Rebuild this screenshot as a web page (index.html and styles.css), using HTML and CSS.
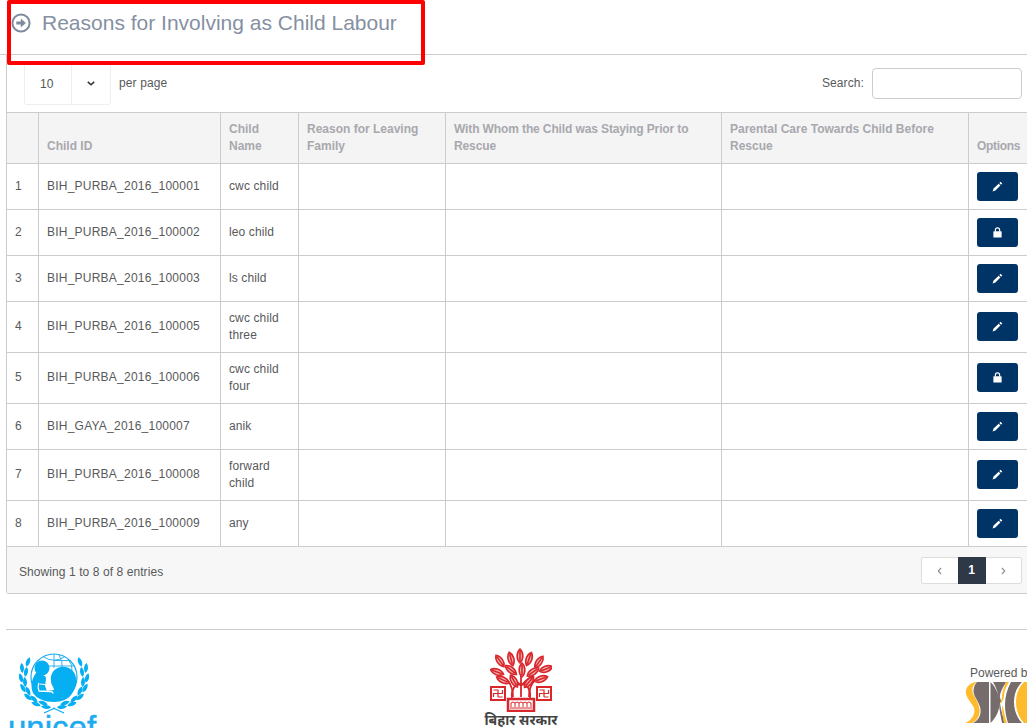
FILE: index.html
```html
<!DOCTYPE html>
<html lang="en">
<head>
<meta charset="utf-8">
<title>Reasons for Involving as Child Labour</title>
<link rel="stylesheet" href="styles.css">
</head>
<body>
<svg class="defs" width="0" height="0">
  <defs>
    <g id="pen"><path d="M9.3.9l1.9 1.900-1.300 1.300L8 2.200zM7.300 2.900l1.900 1.900-5.500 5.500-3.100 1.100 1.100-3.100z" fill="#fff"/></g>
    <g id="lock"><rect x="1.500" y="4.600" width="9" height="6.900" rx=".6" fill="#fff"/><path d="M3.700 5V3.200C3.700 1.900 4.700 1 6 1s2.300.9 2.300 2.200V5" fill="none" stroke="#fff" stroke-width="1.300"/></g>
    <path id="leaf" d="M0-7C3.800-3.500 3.800 3.500 0 7-3.800 3.500-3.800-3.500 0-7zM0-5V5" fill="#f4b4b4" stroke="#d8262c" stroke-width="1.600"/>
    <path id="wleaf" d="M0-5C2.600-2 2.600 2 0 5-2.600 2-2.600-2 0-5z" fill="#06aef2"/>
  </defs>
</svg>
<div class="highlight"></div>
<header class="page-head">
  <svg class="head-icon" viewBox="0 0 20 20"><circle cx="10" cy="10" r="8.600" fill="none" stroke="#7f8b9e" stroke-width="2"/><path d="M5.300 8.400h4.500V5.600L14.800 10l-5 4.400v-2.800H5.300z" fill="#7f8b9e"/></svg>
  <h1>Reasons for Involving as Child Labour</h1>
</header>
<main class="panel">
  <div class="toolbar">
    <div class="length">
      <div class="length-box"><span class="length-val">10</span><span class="length-arrow"><svg viewBox="0 0 10 6" class="chev"><path d="M1 1l4 3.600L9 1" fill="none" stroke="#333" stroke-width="2"/></svg></span></div>
      <span class="per">per page</span>
    </div>
    <label class="search">Search:<span class="search-input"></span></label>
  </div>
  <table>
    <colgroup><col class="c1"><col class="c2"><col class="c3"><col class="c4"><col class="c5"><col class="c6"><col class="c7"></colgroup>
    <thead><tr><th></th><th>Child ID</th><th>Child Name</th><th>Reason for Leaving Family</th><th class="th-tight">With Whom the Child was Staying Prior to Rescue</th><th>Parental Care Towards Child Before Rescue</th><th class="th-opt">Options</th></tr></thead>
    <tbody>
      <tr><td>1</td><td class="id">BIH_PURBA_2016_100001</td><td>cwc child</td><td></td><td></td><td></td><td class="opt"><a class="btn"><svg viewBox="0 0 12 12"><use href="#pen"/></svg></a></td></tr>
      <tr><td>2</td><td class="id">BIH_PURBA_2016_100002</td><td>leo child</td><td></td><td></td><td></td><td class="opt"><a class="btn"><svg viewBox="0 0 12 12"><use href="#lock"/></svg></a></td></tr>
      <tr><td>3</td><td class="id">BIH_PURBA_2016_100003</td><td>ls child</td><td></td><td></td><td></td><td class="opt"><a class="btn"><svg viewBox="0 0 12 12"><use href="#pen"/></svg></a></td></tr>
      <tr class="tall"><td>4</td><td class="id">BIH_PURBA_2016_100005</td><td class="two">cwc child three</td><td></td><td></td><td></td><td class="opt"><a class="btn"><svg viewBox="0 0 12 12"><use href="#pen"/></svg></a></td></tr>
      <tr class="tall"><td>5</td><td class="id">BIH_PURBA_2016_100006</td><td class="two">cwc child four</td><td></td><td></td><td></td><td class="opt"><a class="btn"><svg viewBox="0 0 12 12"><use href="#lock"/></svg></a></td></tr>
      <tr><td>6</td><td class="id">BIH_GAYA_2016_100007</td><td>anik</td><td></td><td></td><td></td><td class="opt"><a class="btn"><svg viewBox="0 0 12 12"><use href="#pen"/></svg></a></td></tr>
      <tr class="tall"><td>7</td><td class="id">BIH_PURBA_2016_100008</td><td class="two">forward child</td><td></td><td></td><td></td><td class="opt"><a class="btn"><svg viewBox="0 0 12 12"><use href="#pen"/></svg></a></td></tr>
      <tr><td>8</td><td class="id">BIH_PURBA_2016_100009</td><td>any</td><td></td><td></td><td></td><td class="opt"><a class="btn"><svg viewBox="0 0 12 12"><use href="#pen"/></svg></a></td></tr>
    </tbody>
  </table>
  <div class="panel-foot">
    <span>Showing 1 to 8 of 8 entries</span>
    <div class="pager">
      <span class="pg"><svg viewBox="0 0 6 10" class="pg-chev"><path d="M5 1L1.500 5 5 9" fill="none" stroke="#8a8f99" stroke-width="1.500"/></svg></span>
      <span class="pg cur">1</span>
      <span class="pg"><svg viewBox="0 0 6 10" class="pg-chev"><path d="M1 1l3.500 4L1 9" fill="none" stroke="#8a8f99" stroke-width="1.500"/></svg></span>
    </div>
  </div>
</main>
<footer class="site-foot">
  <div class="logo-unicef">
    <svg viewBox="0 0 70 62" class="unicef-mark">
      <g fill="none" stroke="#1cabf0">
        <circle cx="35" cy="24" r="23" stroke-width="1.200"/>
        <path d="M35 1v14M24 3.500Q35 11 46 3.500M28 13H56M40 2q4 6 3 13M49 6q5 6 4 12M36 7.500H51" stroke-width=".9"/>
      </g>
      <g fill="#06aef2">
        <circle cx="23" cy="15" r="7.500"/>
        <path d="M18 19c-5 5-7 14-4 21 4 6 12 9 21 9 8 0 14-3 17-7 4-5 6-11 5-17-1-8-8-12-15-11-7 1-11 7-10 14 0 4 3 6 3 9l-7 1-2-5 1-7c0-3-2-4-4-4z"/>
      </g>
      <path d="M20 30c-1 2-1 6 0 8l11 .500c2 0 3 1 3 2" fill="none" stroke="#fff" stroke-width="1.300"/>
      <path d="M21 31l9 1" fill="none" stroke="#fff" stroke-width="1"/>
      <g>
        <use href="#wleaf" transform="translate(9 9) rotate(20)"/><use href="#wleaf" transform="translate(3 15) rotate(-5)"/><use href="#wleaf" transform="translate(7 19) rotate(10)"/><use href="#wleaf" transform="translate(2 25) rotate(-15)"/><use href="#wleaf" transform="translate(6 29) rotate(-5)"/><use href="#wleaf" transform="translate(4 35) rotate(-30)"/><use href="#wleaf" transform="translate(9 38) rotate(-25)"/><use href="#wleaf" transform="translate(9 44) rotate(-50)"/><use href="#wleaf" transform="translate(15 46) rotate(-45)"/><use href="#wleaf" transform="translate(17 51) rotate(-70)"/><use href="#wleaf" transform="translate(24 50) rotate(-70)"/><use href="#wleaf" transform="translate(27 54) rotate(-85)"/>
        <use href="#wleaf" transform="translate(61 9) rotate(-20)"/><use href="#wleaf" transform="translate(67 15) rotate(5)"/><use href="#wleaf" transform="translate(63 19) rotate(-10)"/><use href="#wleaf" transform="translate(68 25) rotate(15)"/><use href="#wleaf" transform="translate(64 29) rotate(5)"/><use href="#wleaf" transform="translate(66 35) rotate(30)"/><use href="#wleaf" transform="translate(61 38) rotate(25)"/><use href="#wleaf" transform="translate(61 44) rotate(50)"/><use href="#wleaf" transform="translate(55 46) rotate(45)"/><use href="#wleaf" transform="translate(53 51) rotate(70)"/><use href="#wleaf" transform="translate(46 50) rotate(70)"/><use href="#wleaf" transform="translate(43 54) rotate(85)"/>
      </g>
      <path d="M25 60l11-5M45 60l-11-5" fill="none" stroke="#06aef2" stroke-width="1.300"/>
    </svg>
    <div class="unicef-word">unicef</div>
  </div>
  <div class="logo-bihar">
    <svg viewBox="0 0 62 64" class="bihar-mark">
      <g fill="none" stroke="#d8262c" stroke-width="1.800">
        <path d="M23 49c0-6-1-12-6-17M39 49c0-6 1-12 6-17M31 36V20M31 38c-3-4-6-7-11-9M31 38c3-4 6-7 11-9"/>
        <path d="M22 50c-1-7 2-14 9-14s10 7 9 14"/>
        <path d="M31 37v12"/>
      </g>
      <use href="#leaf" transform="translate(30 8)"/><use href="#leaf" transform="translate(39 11) rotate(20)"/><use href="#leaf" transform="translate(21 11) rotate(-15)"/><use href="#leaf" transform="translate(49 14) rotate(35)"/><use href="#leaf" transform="translate(10 13) rotate(-35)"/><use href="#leaf" transform="translate(56 21) rotate(70)"/><use href="#leaf" transform="translate(7 24) rotate(-70)"/><use href="#leaf" transform="translate(21 22) rotate(-50)"/><use href="#leaf" transform="translate(32 22)"/><use href="#leaf" transform="translate(43 24) rotate(55)"/><use href="#leaf" transform="translate(13 32) rotate(-65)"/><use href="#leaf" transform="translate(51 31) rotate(70)"/><use href="#leaf" transform="translate(24 33) rotate(-30)"/><use href="#leaf" transform="translate(39 34) rotate(40)"/>
      <g fill="#fff" stroke="#d8262c">
        <rect x="1" y="39" width="14" height="13" stroke-width="2"/><rect x="47" y="39" width="14" height="13" stroke-width="2"/>
        <rect x="18" y="51" width="26" height="12" stroke-width="2.500"/>
      </g>
      <path d="M3.500 42H8v7M12.500 49H8M8 45.500H3.500V49M8 45.500h4.500V42M49.500 42H54v7M58.500 49H54M54 45.500h-4.500V49M54 45.500h4.500V42" fill="none" stroke="#d8262c" stroke-width="1.200"/>
      <path d="M21 59v-4l2-1 2 1v4M25 55l2-1 2 1v4M29 55l2-1 2 1v4M33 55l2-1 2 1v4M37 55l2-1 2 1v4M20 60h22" fill="none" stroke="#d8262c" stroke-width="1"/>
    </svg>
    <div class="bihar-word">बिहार सरकार</div>
  </div>
  <div class="logo-sdrc">
    <div class="powered">Powered by</div>
    <svg viewBox="0 0 62 41" class="sdrc-mark">
      <path d="M11 0C4 1 0 6 1 12c1 5 6 9 8 14 2 6-3 13-9 15h7c6-3 9-9 7-16C13 18 8 14 7.500 9 7 5 9 2 12 0z" fill="#fdbb2d"/>
      <path d="M12 0H24V41H8C14 38 17 32 15 25 13 18 8.500 14 8.500 9 8.500 5 10 2 12 0z" fill="#766c6b"/>
      <path d="M25.500 0c6 6 9 14 9 21s-3 14-9 20z" fill="#766c6b"/>
      <path d="M28 0H41l-1 2c-3 5-5 9-5 12 0 3 1 5 2 6l-2 1c1 8 3 14 5 20h-3c-1-6-3-14-3-20 0-9-3-16-6-21z" fill="#766c6b"/>
      <path d="M41 0h3c-3 5-5 10-5 13 0 3-1 6-3 8l-1-1c2-2 2-4 2-6 0-4 2-9 4-14z" fill="#fdbb2d"/>
      <path d="M38 24c1 7 2 12 4 17h-3c-1-5-2-11-2-16z" fill="#fdbb2d"/>
      <path d="M46 0H57C52 5 49 12 49 20c0 8 3 16 8 21H43c-2-6-3-12-3-18 0-8 2-16 6-23z" fill="#766c6b"/>
      <path d="M62 0h-3c-5 5-8 12-8 20s3 16 8 21h3z" fill="#fdbb2d"/>
    </svg>
  </div>
</footer>
</body>
</html>
```
FILE: styles.css
```css
* { box-sizing: border-box; }
html, body { margin: 0; padding: 0; }
body {
  width: 1027px;
  height: 728px;
  overflow: hidden;
  position: relative;
  background: #fff;
  color: #58595b;
  font-family: "Liberation Sans", Arial, sans-serif;
  font-size: 12px;
  line-height: 17px;
}
.highlight {
  position: absolute;
  left: 7px;
  top: 0;
  width: 418px;
  height: 65px;
  border: 4px solid #f00;
  border-radius: 2px;
  z-index: 5;
}
.page-head {
  height: 55px;
  border-bottom: 1px solid #ccc;
  display: flex;
  align-items: flex-start;
  padding: 11px 0 0 11px;
  gap: 11px;
}
.head-icon { width: 20px; height: 20px; flex: none; margin-top: 2px; }
h1 {
  margin: 0;
  font-size: 21px;
  font-weight: 400;
  line-height: 23px;
  color: #8590a2;
}
.panel {
  margin-left: 6px;
  width: 1021px;
  border-left: 1px solid #ccc;
  border-bottom: 1px solid #ccc;
  border-radius: 0 0 0 3px;
}
.toolbar {
  height: 57px;
  display: flex;
  justify-content: space-between;
  padding: 7px 5px 0 17px;
  align-items: flex-start;
}
.length { display: flex; gap: 8px; align-items: flex-start; }
.length-box {
  width: 87px;
  height: 43px;
  border: 1px solid #eee;
  border-radius: 3px;
  display: flex;
}
.length-val { width: 46px; padding: 13px 0 0 15px; color: #555; }
.length-arrow { flex: 1; border-left: 1px solid #eee; display: flex; align-items: center; justify-content: center; padding-right: 1px; }
.chev { width: 8px; height: 5px; }
.per { padding-top: 13px; letter-spacing: 0.12px; }
.search { display: flex; align-items: center; gap: 8px; padding-top: 6px; letter-spacing: 0.1px; }
.search-input { width: 150px; height: 31px; border: 1px solid #ccc; border-radius: 4px; background: #fff; }
table {
  border-collapse: collapse;
  table-layout: fixed;
  width: 1021px;
  margin-left: -1px;
}
.c1 { width: 32px; }
.c2 { width: 182px; }
.c3 { width: 78px; }
.c4 { width: 147px; }
.c5 { width: 276px; }
.c6 { width: 247px; }
.c7 { width: 59px; }
th, td { border: 1px solid #ccc; padding: 8px; vertical-align: middle; text-align: left; font-weight: 400; }
td { letter-spacing: 0.12px; }
td.id { letter-spacing: 0.23px; }
th { background: #f4f4f4; color: #a8a8ae; font-weight: 700; vertical-align: bottom; }
.th-tight { letter-spacing: -0.12px; }
.th-opt { letter-spacing: -0.3px; }
tr > :last-child { border-right: none; }
.tall td { vertical-align: top; padding-top: 16px; }
.tall td.two { padding-top: 8px; }
.tall td.opt { padding-top: 10px; }
.btn {
  display: flex;
  width: 41px;
  height: 29px;
  background: #003366;
  border-radius: 3px;
  align-items: center;
  justify-content: center;
}
.btn svg { width: 11px; height: 11px; display: block; }
.panel-foot {
  height: 46px;
  background: #f7f7f7;
  display: flex;
  justify-content: space-between;
  align-items: flex-start;
  padding: 10px 5px 0 12px;
}
.panel-foot > span { padding-top: 7px; letter-spacing: 0.08px; }
.pager {
  display: flex;
  height: 27px;
  border: 1px solid #ddd;
  border-radius: 2px;
  background: #fff;
  width: 101px;
}
.pg { flex: 1; display: flex; align-items: center; justify-content: center; }
.pg-chev { width: 5px; height: 8px; }
.pg.cur { flex: none; width: 28px; margin: -1px 0; background: #2f3847; color: #fff; font-weight: 700; }
.site-foot {
  margin: 35px 0 0 6px;
  border-top: 1px solid #ccc;
  display: grid;
  grid-template-columns: 470px 90px 1fr;
  height: 99px;
  overflow: hidden;
}
.logo-unicef { padding: 23px 0 0 13px; }
.unicef-mark { display: block; width: 70px; height: 62px; }
.unicef-word {
  font-size: 33px;
  line-height: 30px;
  color: #1cabf0;
  -webkit-text-stroke: 0.5px #1cabf0;
  margin: -2px 0 0 -11px;
}
.logo-bihar { padding-top: 18px; text-align: center; }
.bihar-mark { display: block; width: 62px; height: 64px; margin: 0 auto; }
.bihar-word {
  font-family: "Noto Sans", "DejaVu Sans", sans-serif;
  font-size: 14px;
  line-height: 16px;
  color: #444;
  font-weight: 700;
  white-space: nowrap;
}
.logo-sdrc { width: 62px; justify-self: end; padding-top: 36px; }
.powered { padding-left: 5px; line-height: 15px; white-space: nowrap; }
.sdrc-mark { display: block; width: 62px; height: 41px; margin-top: 1px; }
.defs { position: absolute; }
```
